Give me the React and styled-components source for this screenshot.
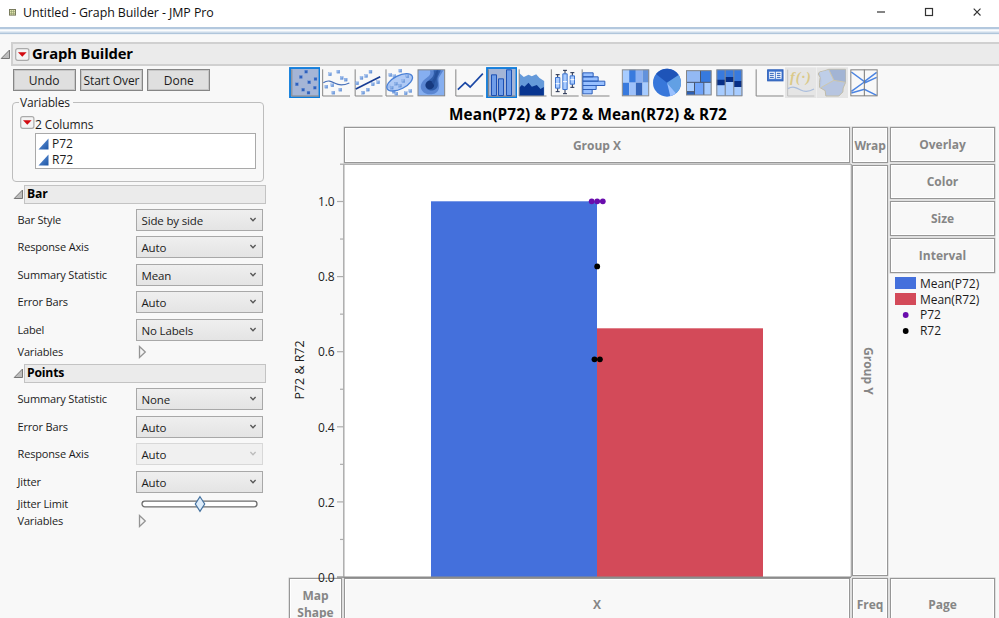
import React from "react";
import styled, { createGlobalStyle } from "styled-components";

const Global = createGlobalStyle`
  * { box-sizing: border-box; }
  html, body { margin: 0; height: 100%; overflow: hidden; background: #f8f8f8; }
  body, text { font-family: "Open Sans", "Noto Sans", sans-serif; }
  svg { display: block; flex: none; }
`;

const Window = styled.div`
  width: 999px;
  height: 618px;
  overflow: hidden;
  display: flex;
  flex-direction: column;
  background: #f8f8f8;
  color: #1c1c1c;
  font-size: 12px;
  white-space: nowrap;
`;

const TitleBar = styled.header`
  height: 27px;
  flex: none;
  display: flex;
  align-items: center;
  padding: 0 16px 3px 9px;
  background: #fff;
`;

const WindowTitle = styled.span`
  margin: 2px 0 0 7px;
  font-size: 12.4px;
  line-height: 16px;
  letter-spacing: -0.07px;
  color: #111;
`;

const WindowControls = styled.div`
  display: flex;
  gap: 36px;
  margin-left: auto;
`;

const RibbonEdge = styled.div`
  height: 8px;
  flex: none;
  background: linear-gradient(#b3c8de 0 2px, #e9f0f7 2px 3px, #fbfcfd 3px 4px, #e3ecf5 4px 5px, #cddbe9 5px 6px, #b0c6db 6px 7px, #eef2f6 7px 8px);
`;

const OutlineRow = styled.div`
  display: flex;
  align-items: center;
  flex: none;
  height: 24px;
  margin-top: 7px;
`;

const OutlineHeader = styled.div`
  flex: 1;
  height: 24px;
  display: flex;
  align-items: center;
  gap: 2px;
  padding-left: 2px;
  border: 2px solid #d0d0d0;
  border-right: 0;
  background: #ebebeb;
`;

const OutlineTitle = styled.h1`
  margin: -2px 0 0;
  font-size: 14.8px;
  line-height: 20px;
  font-weight: 700;
  letter-spacing: -0.15px;
  color: #000;
`;

const Body = styled.div`
  display: flex;
  flex: 1;
  min-height: 0;
`;

const Controls = styled.aside`
  width: 289px;
  flex: none;
  padding: 3px 23px 0 12px;
`;

const ButtonRow = styled.div`
  display: flex;
  gap: 4px;
  padding-left: 0.5px;
`;

const PushButton = styled.button`
  width: 63.3px;
  height: 22px;
  padding: 1px 0 0;
  border: 1px solid #868686;
  box-shadow: inset 0 0 0 1px #c6c6c6;
  background: #dfdfdf;
  color: #1c1c1c;
  font: 12px/16px "Open Sans", sans-serif;
  letter-spacing: ${(p) => p.$track || 0}px;
`;

const VariablesGroup = styled.section`
  width: 252px;
  height: 80px;
  margin-top: 11px;
  padding: 0 8px 0 7px;
  border: 1px solid #bdbdbd;
  border-radius: 4px;
`;

const GroupLegend = styled.div`
  width: 54px;
  height: 15px;
  margin: -8px 0 0 -1px;
  padding-left: 1px;
  line-height: 15px;
  letter-spacing: -0.15px;
  background: #f8f8f8;
`;

const ColumnsRow = styled.div`
  display: flex;
  align-items: center;
  height: 16px;
  margin-top: 6px;
  letter-spacing: -0.1px;
  svg { margin-top: -4px; }
`;

const ColumnList = styled.div`
  width: 221px;
  height: 36px;
  margin: 1px 0 0 15px;
  padding: 2px 2px 0;
  border: 1px solid #a9a9a9;
  background: #fff;
`;

const ColumnItem = styled.div`
  display: flex;
  align-items: center;
  gap: 3px;
  height: 15.7px;
`;

const SectionRow = styled.div`
  display: flex;
  align-items: center;
  width: 254px;
  height: 19px;
  margin: ${(p) => p.$top}px 0 ${(p) => p.$bottom}px;
  padding-left: 1px;
`;

const SectionTitle = styled.h2`
  flex: 1;
  height: 19px;
  margin: 0;
  padding-left: 2px;
  border: 1px solid #c3c3c3;
  background: #ebebeb;
  color: #000;
  font-size: 12.2px;
  line-height: 16px;
  font-weight: 700;
  letter-spacing: -0.2px;
`;

const Field = styled.div`
  display: flex;
  align-items: center;
  height: ${(p) => p.$h || 27.4}px;
  padding-left: 5.5px;
`;

const FieldLabel = styled.label`
  width: ${(p) => p.$w || 118}px;
  flex: none;
  font-size: 11px;
  line-height: 16px;
  letter-spacing: -0.16px;
`;

const Select = styled.div`
  display: flex;
  align-items: center;
  justify-content: space-between;
  width: 127.5px;
  height: 22px;
  padding: 2px 5px 0 5px;
  border: 1px solid ${(p) => (p.$disabled ? "#d8d8d8" : "#a8a8a8")};
  background: ${(p) => (p.$disabled ? "#f0f0f0" : "linear-gradient(#efefef, #e4e4e4)")};
  font-size: 11.5px;
  line-height: 18px;
  letter-spacing: -0.15px;
  color: #1c1c1c;
  svg { margin-top: -2px; }
`;

const Graph = styled.main`
  flex: 1;
  min-width: 0;
  display: flex;
  flex-direction: column;
`;

const Toolbar = styled.div`
  display: flex;
  flex: none;
  gap: 8px;
  height: 32px;
  margin-left: -0.5px;
  padding-top: 0.7px;
`;

const ToolGroup = styled.div`
  display: flex;
`;

const GraphTitle = styled.h2`
  flex: none;
  width: 598px;
  height: 29px;
  margin: 0;
  padding-top: 6px;
  text-align: center;
  font-size: 15.3px;
  line-height: 20px;
  font-weight: 700;
  letter-spacing: 0.12px;
  color: #000;
`;

const ZoneGrid = styled.div`
  flex: none;
  display: grid;
  grid-template-columns: 53px 506px 36px 105px;
  grid-template-rows: 36px 413px 52px;
  column-gap: 2px;
  row-gap: 1px;
`;

const Zone = styled.div`
  display: flex;
  align-items: center;
  justify-content: center;
  flex: none;
  height: ${(p) => (p.$h ? `${p.$h}px` : "auto")};
  border: 1px solid #979797;
  box-shadow: inset 0 0 0 1px #fff, 0 0 0 0.5px #c8c8c8;
  text-align: center;
  font-size: 12px;
  line-height: 17px;
  font-weight: 700;
  letter-spacing: ${(p) => p.$track || 0}px;
  color: #868686;
`;

const SideZone = styled(Zone)`
  margin: 1px 0;
`;

const VerticalLabel = styled.span`
  writing-mode: vertical-rl;
  margin-right: 3px;
`;

const PlotCell = styled.div`
  grid-column: 1 / 3;
  grid-row: 2;
  min-width: 0;
  z-index: 1;
`;

const LegendColumn = styled.div`
  grid-column: 4;
  grid-row: 1 / 3;
  display: flex;
  flex-direction: column;
  gap: 2px;
`;

const LegendList = styled.ul`
  margin: 0.4px 0 0;
  padding: 0 0 0 5px;
  list-style: none;
`;

const LegendItem = styled.li`
  display: flex;
  align-items: center;
  gap: 4px;
  height: 15.8px;
  letter-spacing: -0.05px;
`;

const RedTriangle = () => (
  <svg width="15" height="13" viewBox="0 0 15 13">
    <rect x="0.7" y="0.7" width="13.2" height="11.6" rx="2" fill="#f4f4f4" stroke="#aaa" strokeWidth="1.2" />
    <path d="M3 4.2h8.6L7.3 8.8z" fill="#d20a10" />
  </svg>
);

const Disclosure = () => (
  <svg width="11" height="11" viewBox="0 0 11 11">
    <path d="M1.2 9.5 9.5 1v8.5z" fill="#bdbdbd" stroke="#777" />
  </svg>
);

const ClosedDisclosure = () => (
  <svg width="10" height="14" viewBox="0 0 10 14">
    <path d="M2.5 1.5v11L8.3 7z" fill="#f5f5f5" stroke="#949494" strokeWidth="1.3" />
  </svg>
);

const Continuous = () => (
  <svg width="11" height="12" viewBox="0 0 11 12">
    <defs>
      <linearGradient id="cont" x2="1" y2="1">
        <stop stopColor="#6a9ade" />
        <stop offset="1" stopColor="#1c55a5" />
      </linearGradient>
    </defs>
    <path d="M0.5 11.5 10.5 0.5v11z" fill="url(#cont)" />
  </svg>
);

const Chevron = ({ disabled }) => (
  <svg width="8" height="6" viewBox="0 0 8 6">
    <path d="m1.4 1 2.6 2.8L6.6 1" fill="none" stroke={disabled ? "#bbb" : "#555"} strokeWidth="1.3" />
  </svg>
);

const AppIcon = () => (
  <svg width="7" height="7" viewBox="0 0 7 7">
    <rect x="0.5" y="0.5" width="6" height="5.6" fill="#e6e8b4" stroke="#77785c" />
    <path d="M0.5 2.5h6M0.5 4.4h6M2.5 0.5v5.6M4.5 0.5v5.6" stroke="#8b9968" strokeWidth=".6" />
  </svg>
);

const Axes = ({ x }) => <path d={`M${x} 27v80h82`} fill="none" stroke="#858585" strokeWidth="3" />;

const Dots = ({ at, fill = "url(#dot)", s = 9 }) =>
  at.map(([x, y]) => <rect key={`${x}-${y}`} x={x - s / 2} y={y - s / 2} width={s} height={s} fill={fill} stroke="#6f98da" strokeWidth="1" />);

const Tool = ({ ox, active, disabled, children }) => (
  <svg width="31.5" height="31.5" viewBox={`${ox} 20 94.5 94.5`}>
    <defs>
      <linearGradient id="dot" x2="1" y2="1">
        <stop stopColor="#b5d0f8" />
        <stop offset="1" stopColor="#5284cf" />
      </linearGradient>
    </defs>
    {disabled && <rect x={ox} y="21" width="94.5" height="93" fill="#e5e5e5" />}
    {active && <rect x={ox + 3} y="23" width="88.5" height="88.5" fill="#a5b5d6" stroke="#0b7bdc" strokeWidth="5.5" />}
    {children}
  </svg>
);

const PointTools = () => (
  <ToolGroup>
    <Tool ox={10.5} active>
      <Axes x={19} />
      <Dots fill="#2f60bd" at={[[62, 34], [46, 50], [90, 56], [34, 72], [71, 66], [88, 82], [53, 88], [69, 97]]} />
    </Tool>
    <Tool ox={105}>
      <Axes x={113} />
      <Dots at={[[135, 42], [160, 34], [170, 53], [182, 58], [124, 79], [142, 75], [166, 88], [145, 97]]} />
      <path d="M115 67c14-9 24-4 35 2s27 6 43-1" fill="none" stroke="#466fb8" strokeWidth="3.5" />
    </Tool>
    <Tool ox={199.5}>
      <Axes x={209} />
      <Dots at={[[255, 34], [228, 53], [242, 47], [215, 69], [262, 72], [278, 66], [233, 97], [247, 88]]} />
      <path d="M211 86 284 49" stroke="#173c94" strokeWidth="5" />
    </Tool>
    <Tool ox={294}>
      <Axes x={303} />
      <Dots at={[[316, 44], [328, 48], [346, 31], [312, 78], [326, 94], [334, 100], [362, 99], [376, 92]]} />
      <ellipse cx="344" cy="66" rx="42" ry="20" transform="rotate(-27 344 66)" fill="#a3c2f4" fillOpacity=".85" stroke="#4a80d6" strokeWidth="4" />
      <Dots at={[[367, 48], [355, 62], [333, 70], [345, 76], [320, 82]]} />
    </Tool>
    <Tool ox={388.5}>
      <rect x="397.5" y="28.5" width="80" height="78" fill="#86aff0" stroke="#858585" strokeWidth="3" />
      <path d="M433 30c5 13-3 18-14 26-13 10-17 24-9 35 12 17 45 14 50-6 4-15-4-24 1-34l13-21z" fill="#5a86d2" />
      <path d="M444 30c4 14-3 22-14 30-10 7-13 17-6 25 10 10 31 5 33-9 1-12-4-20 1-29l8-17z" fill="#2f5da9" />
      <circle cx="433" cy="74" r="13" fill="#16397e" />
      <path d="M438 64c12-12 8-22 16-34h5c-4 20-6 26-14 44z" fill="#25509b" />
    </Tool>
  </ToolGroup>
);

const BarTools = () => (
  <ToolGroup>
    <Tool ox={13.5}>
      <Axes x={19} />
      <path d="m25 88 22-21 15 13 38-40" fill="none" stroke="#1b48a5" strokeWidth="5" />
    </Tool>
    <Tool ox={108} active>
      <path d="M115 27v80h80" fill="none" stroke="#7c7c7c" strokeWidth="3" />
      <g fill="#6f9de8" stroke="#1d50b2" strokeWidth="3">
        <path d="M124.5 43.5h15v62h-15zM145.5 55.5h15v50h-15zM169.5 28.5h15v77h-15z" />
      </g>
    </Tool>
    <Tool ox={202.5}>
      <path d="m209 38 14 12 14-7 10 5 13-6 10 11 14 9v44h-75z" fill="#659ada" />
      <path d="m209 82 8-8 8 5 12-12 10 12 15-5 11 12 10-6v26h-74z" fill="#083590" />
      <Axes x={209} />
    </Tool>
    <Tool ox={297}>
      <Axes x={304} />
      <g stroke="#1f2c4d" strokeWidth="3">
        <path d="M323 43v51M345 30v70M367 37v44M317 43h12M317 94h12M339 30h12M339 100h12M361 37h12M361 81h12" />
      </g>
      <g fill="#a9cbff" stroke="#3c73ce" strokeWidth="3">
        <path d="M316.5 51.5h13v32h-13zM338.5 40.5h13v47h-13zM360.5 46.5h13v25h-13z" />
      </g>
      <path d="M317 70h12M339 64h12M361 58h12" stroke="#fff" strokeWidth="3" />
    </Tool>
    <Tool ox={391.5}>
      <Axes x={398} />
      <g fill="#98c0ff" stroke="#2d5fba" strokeWidth="3">
        <path d="M400 37.5h31v12h-31zM400 49.5h46v13h-46zM400 62.5h66v13h-66zM400 75.5h40v12h-40zM400 87.5h28v13h-28z" />
      </g>
    </Tool>
  </ToolGroup>
);

const ShapeTools = () => (
  <ToolGroup>
    <Tool ox={22.5}>
      {["#a7ccff", "#387ade", "#8ab0f2", "#6292dc", "#387ade", "#9ec1fa", "#3465bb", "#a7ccff"].map((c, i) => (
        <rect key={i} x={30 + (i % 4) * 20} y={28 + Math.floor(i / 4) * 39} width="20" height="39" fill={c} />
      ))}
      <rect x="29.5" y="28.5" width="79" height="78" fill="none" stroke="#8c8c8c" strokeWidth="3" />
    </Tool>
    <Tool ox={117}>
      <circle cx="165" cy="67" r="42" fill="#3877da" />
      <path d="M165 67 132 41a42 42 0 0 1 68 3z" fill="#1e54b8" />
      <path d="m165 67 35-23a42 42 0 0 1-8 55z" fill="#62a0e4" />
      <path d="m165 67 27 32a42 42 0 0 1-17 9z" fill="#99c1ff" />
    </Tool>
    <Tool ox={211.5}>
      <rect x="222" y="31" width="74" height="73" fill="#6fa4fa" />
      <path d="M222 31h42v35h-42z" fill="#93b9f4" />
      <path d="M264 31h32v35h-32z" fill="#377ade" />
      <path d="M222 66h24v28h-24zM274 66h22v38h-22z" fill="#a7ccff" />
      <path d="M222 94h24v10h-24z" fill="#2c61b8" />
      <path d="M222 66h74M264 31v35M246 66v38M274 66v38M222 94h24" stroke="#48566f" strokeWidth="3" />
      <rect x="222" y="31" width="74" height="73" fill="none" stroke="#858585" strokeWidth="3" />
    </Tool>
    <Tool ox={306}>
      <path d="M314 28h77v79h-77z" fill="#387ade" />
      <path d="M314 58h25v18h-25zM340 50h25v17h-25zM366 62h24v20h-24z" fill="#062f87" />
      <path d="M314 75h25v31h-25zM340 65h25v41h-25zM366 80h24v26h-24z" fill="#a7ccff" />
      <path d="M339.5 29v77M365.5 29v77" stroke="#888" strokeWidth="3" />
      <rect x="314.5" y="28.5" width="75" height="78" fill="none" stroke="#8c8c8c" strokeWidth="3" />
    </Tool>
  </ToolGroup>
);

const ScriptText = styled.text`
  && {
    font: italic 700 43px "Liberation Serif", serif;
    fill: #dac98a;
  }
`;

const MiscTools = () => (
  <ToolGroup>
    <Tool ox={10.5}>
      <Axes x={17} />
      <rect x="51.5" y="28.5" width="46" height="33" fill="#477bd2" stroke="#2459b6" strokeWidth="3" />
      <path d="M56 34h17v21H56zM76 34h17v21H76z" fill="#fff" />
      <path d="M58 39h12M58 45h12M58 51h12M79 39h11M79 45h11M79 51h11" stroke="#2459b6" strokeWidth="3" />
    </Tool>
    <Tool ox={105} disabled>
      <path d="M113 28v79h80" fill="none" stroke="#c1c1c1" strokeWidth="3" />
      <ScriptText x="120" y="65" textLength="62">f(·)</ScriptText>
      <path d="M114 85c15-9 25-3 38 4s26 5 40-3" fill="none" stroke="#a9bddd" strokeWidth="4" />
    </Tool>
    <Tool ox={199.5} disabled>
      <path d="M207 35 223 31 235 27h50v40l-7 16-1 12-12 12h-39l-2-16-17-10v-15l2-15-6-10z" fill="#b7c5e0" stroke="#c0bcaa" strokeWidth="3" />
      <path d="M235 28h50v38l-35-5z" fill="#a2b4d4" />
      <path d="m208 36 27-7 15 31-40 23 3-22z" fill="#becee8" />
      <path d="m235 28 15 32-39 22m39-22 35 6" fill="none" stroke="#cec7ad" strokeWidth="3" />
    </Tool>
    <Tool ox={294}>
      <path d="m304 35 39 29 37-28M343 68l37-17M304 98l39-11 37 18M304 93l39-28" fill="none" stroke="#4b84e2" strokeWidth="4.5" />
      <path d="M343 28v79" stroke="#777" strokeWidth="3" />
      <rect x="302.5" y="28.5" width="79" height="78" fill="none" stroke="#7e7e7e" strokeWidth="3" />
    </Tool>
  </ToolGroup>
);

const TICK = 37.55;
const BASE = 577;

const Chart = () => (
  <svg width="563" height="415" viewBox="289 164 563 415" overflow="visible">
    <rect x="344" y="164.5" width="507" height="413" fill="#fff" />
    <rect x="431" y="201.3" width="166" height="375.7" fill="#4470dc" />
    <rect x="597" y="328.3" width="166" height="248.7" fill="#d34a59" />
    <path d="M340 164.3h511" stroke="#b4b4b4" strokeWidth="1.5" />
    <path d="M343.8 164v413" stroke="#adadad" strokeWidth="1.5" />
    <path d="M851.3 164v413" stroke="#a8a8a8" strokeWidth="1.2" />
    <path d="M337 577.3h514" stroke="#8c8c8c" strokeWidth="1.5" />
    {Array.from({ length: 11 }, (_, i) => (
      <path key={i} d={`M${i % 2 ? 340 : 337} ${BASE - i * TICK}H343.5`} stroke="#adadad" strokeWidth="1.2" />
    ))}
    {[0, 1, 2, 3, 4, 5].map((i) => (
      <text key={i} x="318" y={BASE + 4.7 - i * TICK * 2} fontSize="12" textLength="16.5" fill="#222">
        {(i * 0.2).toFixed(1)}
      </text>
    ))}
    <text transform="translate(303.7 399.5) rotate(-90)" fontSize="12" textLength="59" lengthAdjust="spacingAndGlyphs" fill="#1c1c1c">P72 &amp; R72</text>
    <g fill="#6a0dad">
      {[591.7, 597.2, 602.8].map((x) => <circle key={x} cx={x} cy="201.3" r="2.9" />)}
    </g>
    <circle cx="597.2" cy="266.4" r="2.9" />
    <circle cx="594.5" cy="359.3" r="2.9" />
    <circle cx="599.9" cy="359.3" r="2.9" />
  </svg>
);

const Swatch = ({ color, dot }) => (
  <svg width="21" height="12" viewBox="0 0 21 12">
    {dot ? <circle cx="10.7" cy="6" r="2.9" fill={color} /> : <rect width="21" height="12" fill={color} />}
  </svg>
);

const DropField = ({ label, value, disabled }) => (
  <Field>
    <FieldLabel>{label}</FieldLabel>
    <Select $disabled={disabled}>
      {value}
      <Chevron disabled={disabled} />
    </Select>
  </Field>
);

export default function App() {
  return (
    <Window>
      <Global />
      <TitleBar>
        <AppIcon />
        <WindowTitle>Untitled - Graph Builder - JMP Pro</WindowTitle>
        <WindowControls>
          <svg width="12" height="12" viewBox="0 0 12 12"><path d="M2 6h8" stroke="#333" strokeWidth="1.2" /></svg>
          <svg width="12" height="12" viewBox="0 0 12 12"><rect x="2.5" y="2.5" width="7" height="7" fill="none" stroke="#333" strokeWidth="1.2" /></svg>
          <svg width="12" height="12" viewBox="0 0 12 12"><path d="m2.7 2.7 6.8 6.8m0-6.8L2.7 9.5" stroke="#333" strokeWidth="1.1" /></svg>
        </WindowControls>
      </TitleBar>
      <RibbonEdge />
      <OutlineRow>
        <Disclosure />
        <OutlineHeader>
          <RedTriangle />
          <OutlineTitle>Graph Builder</OutlineTitle>
        </OutlineHeader>
      </OutlineRow>
      <Body>
        <Controls>
          <ButtonRow>
            <PushButton>Undo</PushButton>
            <PushButton $track={-0.1}>Start Over</PushButton>
            <PushButton>Done</PushButton>
          </ButtonRow>
          <VariablesGroup>
            <GroupLegend>Variables</GroupLegend>
            <ColumnsRow><RedTriangle />2 Columns</ColumnsRow>
            <ColumnList>
              <ColumnItem><Continuous />P72</ColumnItem>
              <ColumnItem><Continuous />R72</ColumnItem>
            </ColumnList>
          </VariablesGroup>
          <SectionRow $top={3} $bottom={2.3}>
            <Disclosure />
            <SectionTitle>Bar</SectionTitle>
          </SectionRow>
          <DropField label="Bar Style" value="Side by side" />
          <DropField label="Response Axis" value="Auto" />
          <DropField label="Summary Statistic" value="Mean" />
          <DropField label="Error Bars" value="Auto" />
          <DropField label="Label" value="No Labels" />
          <Field $h={17}><FieldLabel $w={119}>Variables</FieldLabel><ClosedDisclosure /></Field>
          <SectionRow $top={4} $bottom={2.4}>
            <Disclosure />
            <SectionTitle>Points</SectionTitle>
          </SectionRow>
          <DropField label="Summary Statistic" value="None" />
          <DropField label="Error Bars" value="Auto" />
          <DropField label="Response Axis" value="Auto" disabled />
          <DropField label="Jitter" value="Auto" />
          <Field $h={17.5}>
            <FieldLabel>Jitter Limit</FieldLabel>
            <svg width="128" height="18" viewBox="0 0 128 18">
              <rect x="6" y="6.2" width="115" height="5.6" rx="2.8" fill="#fff" stroke="#6c6c6c" strokeWidth="1.3" />
              <path d="M64 1.7 68.7 9 64 16.3 59.3 9z" fill="#deedfb" stroke="#45729f" strokeWidth="1.2" />
            </svg>
          </Field>
          <Field $h={17.5}><FieldLabel $w={119}>Variables</FieldLabel><ClosedDisclosure /></Field>
        </Controls>
        <Graph>
          <Toolbar>
            <PointTools />
            <BarTools />
            <ShapeTools />
            <MiscTools />
          </Toolbar>
          <GraphTitle>Mean(P72) &amp; P72 &amp; Mean(R72) &amp; R72</GraphTitle>
          <ZoneGrid>
            <span />
            <Zone>Group X</Zone>
            <Zone $track={-0.2}>Wrap</Zone>
            <LegendColumn>
              <Zone $h={35}>Overlay</Zone>
              <Zone $h={35}>Color</Zone>
              <Zone $h={35}>Size</Zone>
              <Zone $h={35}>Interval</Zone>
              <LegendList>
                <LegendItem><Swatch color="#4470dc" />Mean(P72)</LegendItem>
                <LegendItem><Swatch color="#d34a59" />Mean(R72)</LegendItem>
                <LegendItem><Swatch color="#6a0dad" dot />P72</LegendItem>
                <LegendItem><Swatch color="#000" dot />R72</LegendItem>
              </LegendList>
            </LegendColumn>
            <PlotCell><Chart /></PlotCell>
            <SideZone><VerticalLabel>Group Y</VerticalLabel></SideZone>
            <Zone>Map<br />Shape</Zone>
            <Zone>X</Zone>
            <Zone>Freq</Zone>
            <Zone>Page</Zone>
          </ZoneGrid>
        </Graph>
      </Body>
    </Window>
  );
}
